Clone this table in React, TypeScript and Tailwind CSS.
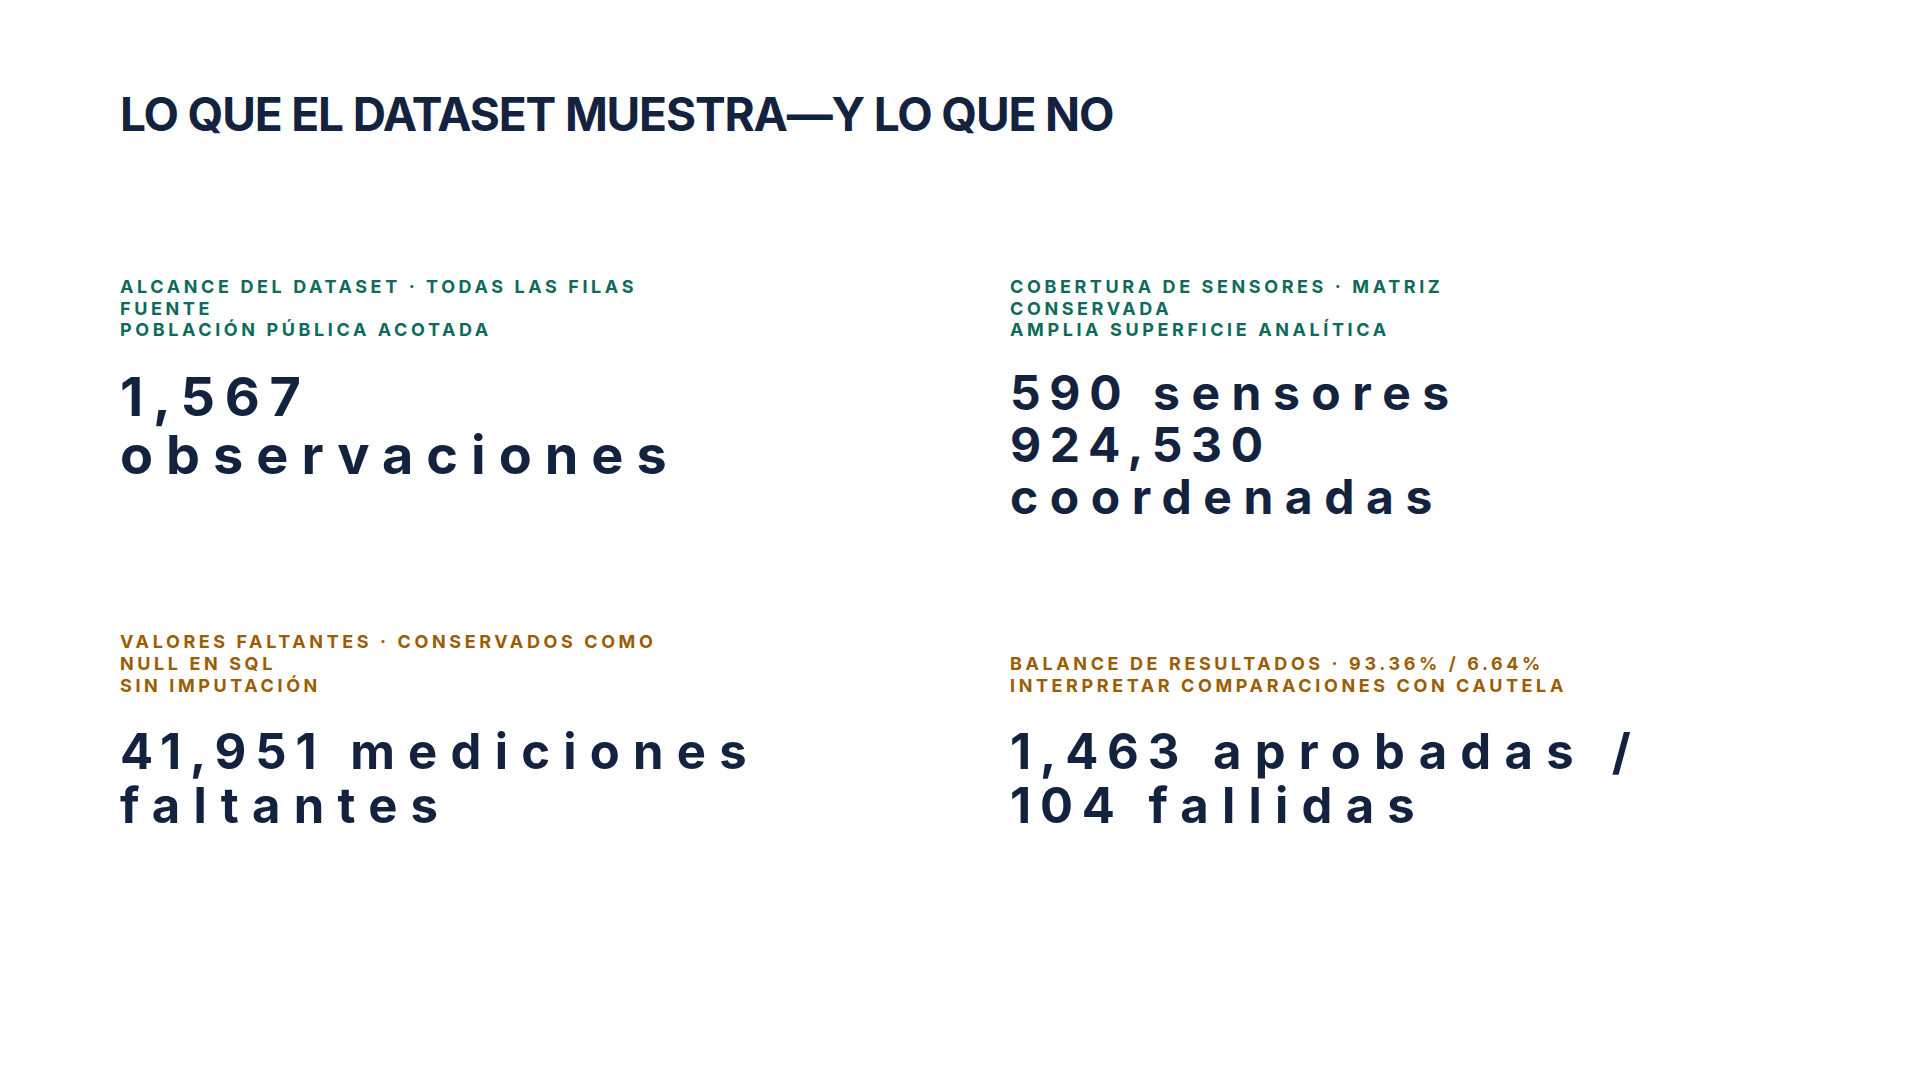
const stats = [
  {
    tone: 'teal',
    label: ['ALCANCE DEL DATASET · TODAS LAS FILAS', 'FUENTE', 'POBLACIÓN PÚBLICA ACOTADA'],
    value: ['1,567', 'observaciones'],
    size: 'mt-[27px] text-[54px] leading-[1.08] tracking-[0.24em]',
  },
  {
    tone: 'teal',
    label: ['COBERTURA DE SENSORES · MATRIZ', 'CONSERVADA', 'AMPLIA SUPERFICIE ANALÍTICA'],
    value: ['590 sensores', '924,530', 'coordenadas'],
    size: 'mt-[26px] text-[48px] leading-[1.08] tracking-[0.24em]',
  },
  {
    tone: 'gold',
    label: ['VALORES FALTANTES · CONSERVADOS COMO', 'NULL EN SQL', 'SIN IMPUTACIÓN'],
    value: ['41,951 mediciones', 'faltantes'],
    size: 'mt-[29px] text-[49px] leading-[1.09] tracking-[0.27em]',
  },
  {
    tone: 'gold',
    label: ['BALANCE DE RESULTADOS · 93.36% / 6.64%', 'INTERPRETAR COMPARACIONES CON CAUTELA'],
    value: ['1,463 aprobadas /', '104 fallidas'],
    size: 'mt-[29px] text-[49px] leading-[1.09] tracking-[0.27em]',
  },
];

type Stat = (typeof stats)[number];

// digits sit tighter than the words around them
const ValueLine = ({ line }: { line: string }) => (
  <>
    {line.split(/(\d[\d,]*)/).map((part, i) =>
      /\d/.test(part) ? (
        <span key={i} className="tracking-[0.18em]">
          {part}
        </span>
      ) : (
        part
      )
    )}
  </>
);

const StatCell = ({ stat }: { stat: Stat }) => (
  <div className="flex flex-col">
    {/* label box keeps 3 lines of room, text sits at the bottom */}
    <div className="flex h-[64.8px] flex-col justify-end">
      <p
        className={`whitespace-nowrap text-[18px] font-bold uppercase leading-[1.2] tracking-[0.2em] ${
          stat.tone === 'teal' ? 'text-[#0e6b5c]' : 'text-[#9b5c02]'
        }`}
      >
        {stat.label.map((line, i) => (
          <span key={line}>
            {i > 0 && <br />}
            {line}
          </span>
        ))}
      </p>
    </div>
    <p className={`whitespace-nowrap font-bold text-[#13233f] ${stat.size}`}>
      {stat.value.map((line, i) => (
        <span key={line}>
          {i > 0 && <br />}
          <ValueLine line={line} />
        </span>
      ))}
    </p>
  </div>
);

export default function App() {
  return (
    <div
      className="h-[1080px] w-full overflow-hidden bg-white px-[120px] pt-[87px]"
      style={{ fontFamily: 'Inter, "Noto Sans", sans-serif' }}
    >
      <h1 className="text-[46px] font-bold uppercase leading-[1.2] tracking-[-0.025em] text-[#13233f]">
        Lo que el dataset muestra—y lo que no
      </h1>

      <div className="mt-[134px] grid grid-cols-2 items-start gap-x-[100px] gap-y-[109px]">
        {stats.map((stat) => (
          <StatCell key={stat.label[0]} stat={stat} />
        ))}
      </div>
    </div>
  );
}
